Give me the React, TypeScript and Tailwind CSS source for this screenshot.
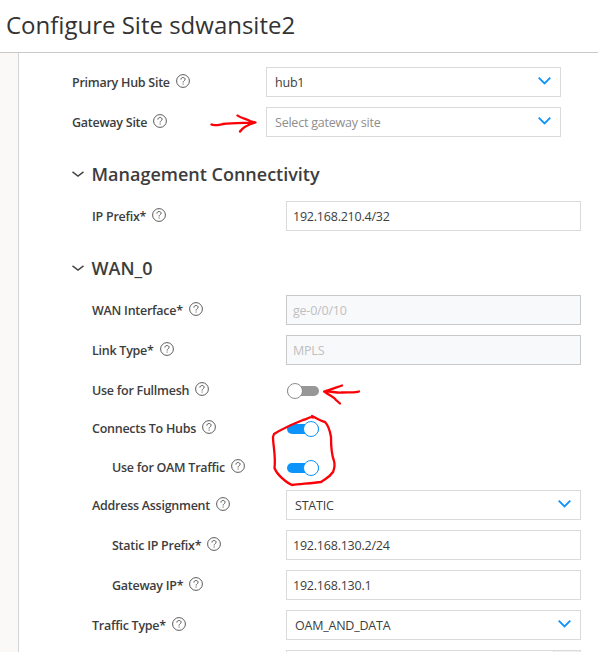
import React from "react";

function HelpIcon() {
  return (
    <svg className="mt-[6.500px] ml-[6px] h-[14px] w-[14px] shrink-0" viewBox="0 0 14 14" fill="none" stroke="#4a4a4a" strokeWidth="0.9">
      <circle cx="7" cy="7" r="6.4" />
      <path d="M4.900 5.600C4.900 4.200 5.800 3.500 7 3.500s2.100.7 2.100 1.800C9.100 6.700 7.100 6.700 7.100 8.500" />
      <path d="M7.100 9.500v1.100" />
    </svg>
  );
}

function Chevron() {
  return (
    <svg className="mr-[9px] h-[8px] w-[13px] shrink-0 -translate-y-px" viewBox="0 0 13 8" fill="none" stroke="#0d94fb" strokeWidth="1.8">
      <path d="M0.700 0.700L6.500 6.500L12.300 0.700" />
    </svg>
  );
}

function Row({ label, indent = "pl-[20px]", height = "h-[40px]", children }: {
  label: string;
  indent?: string;
  height?: string;
  children: React.ReactNode;
}) {
  return (
    <div className={`flex shrink-0 items-start ${height}`}>
      <div className={`flex w-[214px] shrink-0 items-start ${indent}`}>
        <span className="mt-[7px] text-[12.5px] leading-[18px] font-semibold tracking-[-0.26px] whitespace-nowrap">{label}</span>
        <HelpIcon />
      </div>
      {children}
    </div>
  );
}

function Field({ value, disabled = false }: { value: string; disabled?: boolean }) {
  return (
    <div className={`flex h-[30px] w-[295px] items-center border pl-[6px] text-[12.5px] tracking-[-0.22px] ${disabled ? "border-[#c8c9ca] bg-[#f8f9fb] text-[#bfbfbf]" : "border-[#d9dadb] bg-white"}`}>
      <span className="pt-[2px] leading-[18px]">{value}</span>
    </div>
  );
}

function Select({ value, placeholder = false }: { value: string; placeholder?: boolean }) {
  return (
    <div className="flex h-[30px] w-[295px] items-center justify-between border border-[#d9dadb] bg-white pl-[8px] text-[12.5px] tracking-[-0.22px]">
      <span className={`pt-[2px] leading-[18px] ${placeholder ? "text-[#8e8e8e]" : ""}`}>{value}</span>
      <Chevron />
    </div>
  );
}

function Toggle({ on = false }: { on?: boolean }) {
  return (
    <div className={`mt-[11px] ml-[1px] flex h-[10px] w-[32px] items-center rounded-full ${on ? "justify-end bg-[#0d94fb]" : "bg-[#979797]"}`}>
      <span className={`h-[16px] w-[16px] shrink-0 rounded-full border bg-white ${on ? "border-[#0d94fb]" : "border-[#8d8d8d]"}`} />
    </div>
  );
}

function Heading({ title }: { title: string }) {
  return (
    <h2 className="flex h-[26px] items-center text-[18px] font-semibold">
      <svg className="mr-[7.500px] h-[6px] w-[12px]" viewBox="0 0 12 6" fill="none" stroke="#444" strokeWidth="1.5">
        <path d="M0.500 0.800L6 5L11.500 0.800" />
      </svg>
      {title}
    </h2>
  );
}

export default function App() {
  return (
    <div className="relative flex h-[652px] w-[598px] flex-col overflow-hidden bg-white font-['Open_Sans',sans-serif] text-[#3d3d3d]">
      <header className="flex h-[53px] shrink-0 items-center border-b border-[#c9c9c9] pb-[2px] pl-[6px]">
        <h1 className="text-[24px] leading-[34px] whitespace-nowrap text-[#333]">Configure Site sdwansite2</h1>
      </header>
      <div className="flex min-h-0 flex-1">
        <aside className="w-[19px] shrink-0 border-r border-[#d4d4d4] bg-[#faf9f8]" />
        <main className="flex flex-1 flex-col overflow-hidden pt-[14px] pl-[53px]">
          <div className="flex flex-col">
            <Row label="Primary Hub Site" indent="-mr-[20px]"><Select value="hub1" /></Row>
            <Row label="Gateway Site" indent="-mr-[20px]"><Select value="Select gateway site" placeholder /></Row>
          </div>
          <div className="mt-[14px] mb-[14px]"><Heading title="Management Connectivity" /></div>
          <Row label="IP Prefix*"><Field value="192.168.210.4/32" /></Row>
          <div className="mt-[14px] mb-[14px]"><Heading title="WAN_0" /></div>
          <Row label="WAN Interface*"><Field value="ge-0/0/10" disabled /></Row>
          <Row label="Link Type*"><Field value="MPLS" disabled /></Row>
          <Row label="Use for Fullmesh" height="h-[38px]"><Toggle /></Row>
          <Row label="Connects To Hubs" height="h-[39px]"><Toggle on /></Row>
          <Row label="Use for OAM Traffic" indent="pl-[40px]" height="h-[38px]"><Toggle on /></Row>
          <Row label="Address Assignment"><Select value="STATIC" /></Row>
          <Row label="Static IP Prefix*" indent="pl-[40px]"><Field value="192.168.130.2/24" /></Row>
          <Row label="Gateway IP*" indent="pl-[40px]"><Field value="192.168.130.1" /></Row>
          <Row label="Traffic Type*"><Select value="OAM_AND_DATA" /></Row>
          <div className="ml-[214px] flex h-[30px] w-[295px] shrink-0 border border-[#d9dadb]">
            <div className="ml-auto w-[27px] border-l border-[#d9dadb] bg-[#f0f0f0]" />
          </div>
        </main>
      </div>
      <svg className="pointer-events-none absolute inset-0 h-[652px] w-[598px]" viewBox="0 0 598 652" fill="none" stroke="#fb0007" strokeWidth="2.3" strokeLinecap="round" strokeLinejoin="round">
        <path d="M211.500 124.500C214 126 218 125 223 124C232 123 245 123 255 122.500M237.500 115.500C241 118.500 247 119 250 121L255.500 122.500C250 124 243 127 240 131.500" />
        <path d="M359 391.500C355 393 348 392 342 392.500C336 393 330 391 324 391.500C330 390 337 387 342 385.500M325 392C330 396 333 396 336 400L340 403.500" />
        <path d="M313 417.500C310 416 308 419 303 420C293 424 282 429 274 434L273 437C273 445 276 457 274.500 468C277 475 287 483 292 485C301 484 313 483 321 482C325 479 329 478 333 472C335 467 335 464 334 461C331 453 331 445 331 437C330 431 328 425 325 422C320 421 316 418 312 416" />
      </svg>
    </div>
  );
}
